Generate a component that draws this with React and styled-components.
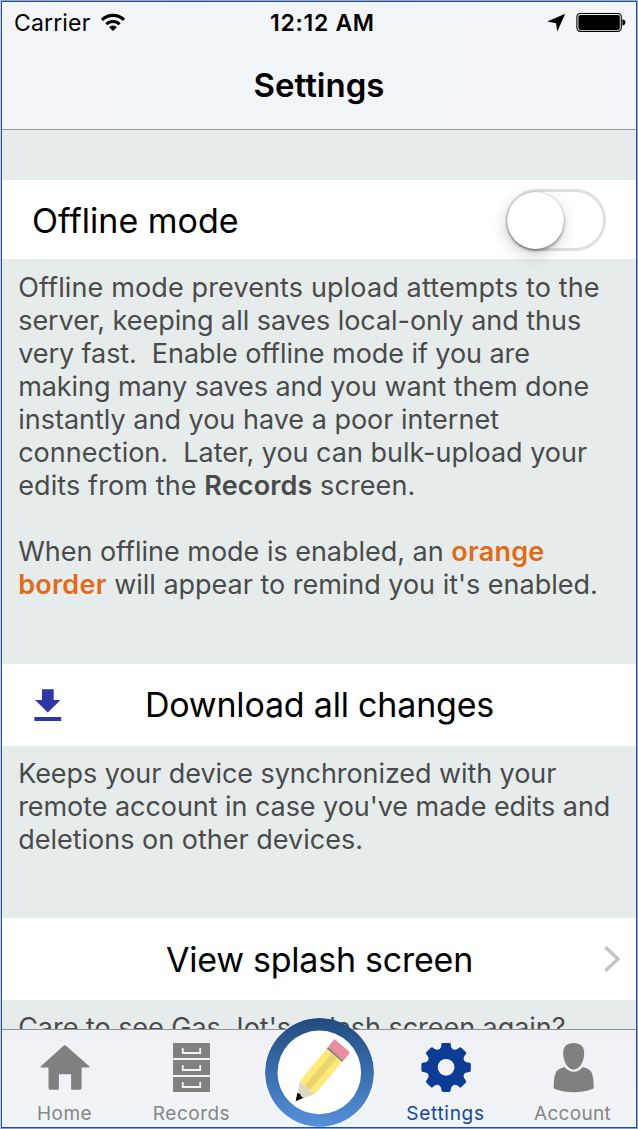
import React from "react";
import styled, { createGlobalStyle } from "styled-components";

const GlobalStyle = createGlobalStyle`
  * { box-sizing: border-box; }
  body {
    margin: 0;
    font-family: Inter, "Liberation Sans", sans-serif;
    color: #000;
  }
  svg { display: block; }
`;

const Frame = styled.div`
  width: 638px;
  height: 1129px;
  border: 1px solid #8fa6c4;
  border-left-color: #c3cfdc;
  border-right-color: #8fabcf;
  border-bottom-color: #7c9ecb;
`;

const Screen = styled.div`
  height: 100%;
  border: 1px solid #24508c;
  background: #e6eceb;
  display: flex;
  flex-direction: column;
`;

const Header = styled.header`
  flex: none;
  height: 128px;
  padding-top: 7px;
  background: linear-gradient(100deg, #f3f4f7, #f1f5f7 40%, #f3f4f7);
  border-bottom: 1px solid #999c9e;
`;

const StatusBar = styled.div`
  display: grid;
  grid-template-columns: 256px auto 1fr;
  align-items: center;
  height: 28px;
  padding: 0 10px 0 12px;
  font-size: 23px;
  line-height: 28px;
  white-space: nowrap;
`;

const Carrier = styled.div`
  display: flex;
  align-items: center;
  gap: 10px;
  letter-spacing: 0.15px;
`;

const Clock = styled.div`
  font-size: 23px;
  font-weight: 600;
  letter-spacing: 0.7px;
`;

const Indicators = styled.div`
  display: flex;
  justify-content: flex-end;
  align-items: center;
  gap: 10px;
`;

const Title = styled.h1`
  margin: 28px 0 0;
  font-size: 33px;
  font-weight: 600;
  line-height: 40px;
  text-align: center;
`;

const Content = styled.main`
  flex: 1;
  min-height: 0;
  overflow: hidden;
  padding-top: 50px;
`;

const SwitchRow = styled.div`
  display: flex;
  justify-content: space-between;
  align-items: center;
  height: 79px;
  padding: 1px 30px 0 30px;
  background: #fff;
`;

const ActionRow = styled.div`
  display: grid;
  grid-template-columns: 1fr auto 1fr;
  align-items: center;
  height: 82px;
  padding: 0 15px 0 32px;
  background: #fff;
`;

const Leading = styled.span`
  justify-self: start;
`;

const Trailing = styled.span`
  justify-self: end;
`;

const RowTitle = styled.span`
  font-size: 34px;
  line-height: 42px;
  letter-spacing: ${(p) => p.$tracking || 0}px;
  white-space: nowrap;
  margin-left: ${(p) => p.$shift || 0}px;
  padding-top: ${(p) => p.$drop || 0}px;
`;

const Track = styled.div`
  display: flex;
  align-items: center;
  width: 100px;
  height: 61.5px;
  border: 3px solid #e0e0e0;
  border-radius: 31px;
`;

const Knob = styled.div`
  flex: none;
  width: 57px;
  height: 57px;
  margin-left: -2px;
  border-radius: 50%;
  background: #fff;
  box-shadow: 0 2px 3px rgba(0, 0, 0, 0.36), -1px 5px 16px rgba(0, 0, 0, 0.2),
    0 0 1px rgba(0, 0, 0, 0.3);
`;

const Note = styled.div`
  height: ${(p) => p.$height}px;
  padding: ${(p) => p.$top || 11}px 0 0 16.2px;
  font-size: 27px;
  line-height: 33px;
  color: #4a4a4a;
`;

const Paragraph = styled.p`
  margin: 0 0 33px;
`;

const Line = styled.span`
  display: block;
  white-space: pre;
  letter-spacing: ${(p) => p.$tracking || 0}px;
`;

const Strong = styled.b`
  font-weight: 600;
`;

const Highlight = styled(Strong)`
  color: #df6b1b;
  letter-spacing: 0.25px;
`;

const TabBar = styled.nav`
  flex: none;
  position: relative;
  height: 98px;
  display: grid;
  grid-template-columns: 125px 129px 126px 127px 127px;
  justify-items: center;
  padding-top: 13px;
  background: linear-gradient(180deg, #f0f1f5, #f1f4f6);
  border-top: 1px solid #8f9294;
`;

const Tab = styled.div`
  display: flex;
  flex-direction: column;
  align-items: center;
  gap: 9px;
  color: ${(p) => (p.$active ? "#0d3c97" : "#808080")};
`;

const TabLabel = styled.span`
  font-size: 19px;
  line-height: 24px;
  letter-spacing: ${(p) => p.$tracking}px;
  color: ${(p) => (p.$active ? "#1546a0" : "#868686")};
`;

const ComposeButton = styled.div`
  position: absolute;
  left: 262.5px;
  top: -12px;
  width: 109px;
  height: 109px;
  border-radius: 50%;
  overflow: hidden;
`;

const WifiIcon = () => (
  <svg width="26" height="20" viewBox="100.5 12.5 26 20" fill="none" stroke="#000">
    <path d="M102.5 19.4A15.6 15.6 0 0 1 124.5 19.4" strokeWidth="3.1" />
    <path d="M106.9 23.7A9.3 9.3 0 0 1 120.1 23.7" strokeWidth="3" />
    <path d="M113.5 30.5L109.6 26.7A5.5 5.5 0 0 1 117.4 26.7Z" fill="#000" stroke="none" />
  </svg>
);

const LocationIcon = () => (
  <svg width="19" height="20" viewBox="547 13 19 20">
    <path d="M565.2 13.8L557.3 31.5L556 23.2L547.2 21.6Z" fill="#000" />
  </svg>
);

const BatteryIcon = () => (
  <svg width="50" height="20" viewBox="576 13 50 20">
    <rect x="576.9" y="13.4" width="44.4" height="18" rx="3.6" fill="none" stroke="#000" strokeWidth="1.1" />
    <rect x="578.4" y="14.9" width="41.4" height="15" rx="2" fill="#000" />
    <path d="M622.4 19.2Q625.4 19.8 625.4 22.4Q625.4 25 622.4 25.6Z" fill="#000" />
  </svg>
);

const DownloadIcon = () => (
  <svg width="28" height="34" viewBox="34 688 28 34" fill="#2d37a5">
    <path d="M42 689.2H53.7V700H60.5L47.8 712.5L35 700H42Z" />
    <rect x="34.4" y="717" width="26.8" height="4" />
  </svg>
);

const ChevronIcon = () => (
  <svg width="17" height="28" viewBox="604 945 17 28" fill="none" stroke="#c3c3c9" strokeWidth="3.4">
    <path d="M605.4 947.2L618 959L605.4 970.8" />
  </svg>
);

const HomeIcon = () => (
  <svg width="50" height="50" viewBox="39.5 1043 50 50" fill="currentColor">
    <path d="M64.3 1045.3Q65 1045.3 65.8 1046.1L89 1066.4Q89.6 1067.6 88.2 1067.6H81.1V1087.8Q81.1 1089.7 79.3 1089.7H70.6V1074.2H58.4V1089.7H49.8Q48 1089.7 48 1087.8V1067.6H40.6Q39.4 1067.4 40.4 1066.2L62.8 1046.1Q63.6 1045.3 64.3 1045.3Z" />
  </svg>
);

const RecordsIcon = () => (
  <svg width="50" height="50" viewBox="167 1043 50 50">
    {[1043, 1060, 1077].map((y) => (
      <g key={y}>
        <rect x="173" y={y} width="37" height="15" fill="currentColor" />
        <path d={`M182.8 ${y + 5}V${y + 10}H200.2V${y + 5}`} fill="none" stroke="#f1f3f5" strokeWidth="1.8" />
      </g>
    ))}
  </svg>
);

const polar = (r, deg) => {
  const a = (deg * Math.PI) / 180;
  return `${(25 + r * Math.sin(a)).toFixed(2)} ${(25 - r * Math.cos(a)).toFixed(2)}`;
};

const gearOutline =
  Array.from({ length: 8 }, (_, i) => {
    const c = i * 45;
    return (
      `${i ? "L" : "M"}${polar(24, c - 11)}Q${polar(25, c - 10)} ${polar(24.9, c - 7)}` +
      `L${polar(24.9, c + 7)}Q${polar(25, c + 10)} ${polar(24, c + 11)}` +
      `Q${polar(20.4, c + 13)} ${polar(19.4, c + 19)}L${polar(19.4, c + 26)}Q${polar(20.4, c + 32)} ${polar(24, c + 34)}`
    );
  }).join("") + "Z";

const GearIcon = () => (
  <svg width="50" height="50" viewBox="-0.1 0.7 50 50">
    <path
      d={`${gearOutline}M25 16.6A8.4 8.4 0 1 0 25 33.4A8.4 8.4 0 1 0 25 16.6Z`}
      fill="currentColor"
      fillRule="evenodd"
    />
  </svg>
);

const AccountIcon = () => (
  <svg width="50" height="50" viewBox="547 1043 50 50" fill="currentColor">
    <path d="M572.7 1043C579.5 1043 583.4 1046.5 583.2 1053.5C583 1062 578.5 1069.6 572.7 1069.6C566.9 1069.6 562.4 1062 562.2 1053.5C562 1046.5 565.9 1043 572.7 1043Z" />
    <path d="M563.6 1067C566 1070.2 569 1071.7 572.7 1071.7C576.4 1071.7 579.4 1070.2 581.8 1067C586 1068.3 589.5 1069.6 590.8 1073C592.3 1077 592.9 1082.5 592.7 1087.4Q592.6 1088.6 591.5 1089C585 1091.3 579 1092.2 572.7 1092.2C566.4 1092.2 560.4 1091.3 553.9 1089Q552.8 1088.6 552.7 1087.4C552.7 1082.5 553.1 1077 554.6 1073C555.9 1069.6 559.4 1068.3 563.6 1067Z" />
  </svg>
);

const PencilBadge = () => (
  <svg width="109" height="109" viewBox="0 0 109 109">
    <defs>
      <linearGradient id="ring" x1="0" y1="0" x2="0" y2="1">
        <stop offset="0" stopColor="#214b7e" />
        <stop offset="1" stopColor="#5491da" />
      </linearGradient>
    </defs>
    <circle cx="54.5" cy="54.4" r="54.4" fill="url(#ring)" />
    <circle cx="54.3" cy="54.4" r="41.8" fill="#fff" />
    <g transform="translate(-10 -8) scale(0.33333)">
      <path d="M239 88L284 126Q285 128 284 130L265 152L219 112L236 89Z" fill="#e98d9f" />
      <path d="M219 111L265 152L261 156L215 116Z" fill="#808080" />
      <path d="M215 116L261 156L180 252L134 214Z" fill="#ffe979" />
      <path d="M231 130L247 143L165 240L149 227Z" fill="#ead66f" />
      <path d="M134 214L180 252L122 274L128 247Z" fill="#dedac3" />
      <path d="M127 249L136 252L138 259L145 263L122 274Z" fill="#000" />
    </g>
  </svg>
);

const tabs = [
  { label: "Home", icon: HomeIcon, tracking: 0.4 },
  { label: "Records", icon: RecordsIcon, tracking: 0.5 },
  null,
  { label: "Settings", icon: GearIcon, tracking: 0.7, active: true },
  { label: "Account", icon: AccountIcon, tracking: 0.3 },
];

export default function App() {
  return (
    <Frame>
      <GlobalStyle />
      <Screen>
        <Header>
          <StatusBar>
            <Carrier>
              Carrier
              <WifiIcon />
            </Carrier>
            <Clock>12:12 AM</Clock>
            <Indicators>
              <LocationIcon />
              <BatteryIcon />
            </Indicators>
          </StatusBar>
          <Title>Settings</Title>
        </Header>

        <Content>
          <SwitchRow>
            <RowTitle $drop={1}>Offline mode</RowTitle>
            <Track role="switch" aria-checked="false">
              <Knob />
            </Track>
          </SwitchRow>
          <Note $height={405} $top={12}>
            <Paragraph>
              <Line $tracking={0.13}>Offline mode prevents upload attempts to the</Line>
              <Line $tracking={-0.05}>server, keeping all saves local-only and thus</Line>
              <Line $tracking={-0.07}>{"very fast.\u00a0 Enable offline mode if you are"}</Line>
              <Line $tracking={-0.08}>making many saves and you want them done</Line>
              <Line>instantly and you have a poor internet</Line>
              <Line $tracking={-0.01}>{"connection.\u00a0 Later, you can bulk-upload your"}</Line>
              <Line $tracking={0.11}>
                edits from the <Strong>Records</Strong> screen.
              </Line>
            </Paragraph>
            <Paragraph>
              <Line $tracking={-0.02}>
                When offline mode is enabled, an <Highlight>orange</Highlight>
              </Line>
              <Line $tracking={-0.02}>
                <Highlight>border</Highlight> will appear to remind you it's enabled.
              </Line>
            </Paragraph>
          </Note>

          <ActionRow>
            <Leading>
              <DownloadIcon />
            </Leading>
            <RowTitle $tracking={-0.2} $shift={-16}>Download all changes</RowTitle>
            <Trailing />
          </ActionRow>
          <Note $height={172}>
            <Line $tracking={-0.08}>Keeps your device synchronized with your</Line>
            <Line $tracking={-0.06}>remote account in case you've made edits and</Line>
            <Line>deletions on other devices.</Line>
          </Note>

          <ActionRow>
            <Leading />
            <RowTitle $tracking={-0.24} $shift={-16} $drop={1}>View splash screen</RowTitle>
            <Trailing>
              <ChevronIcon />
            </Trailing>
          </ActionRow>
          <Note $height={60}>
            <Line $tracking={-0.04}>Care to see Gas Jot's splash screen again?</Line>
          </Note>
        </Content>

        <TabBar>
          {tabs.map((tab) =>
            tab ? (
              <Tab key={tab.label} $active={tab.active}>
                <tab.icon />
                <TabLabel $tracking={tab.tracking} $active={tab.active}>
                  {tab.label}
                </TabLabel>
              </Tab>
            ) : (
              <span key="compose" />
            )
          )}
          <ComposeButton>
            <PencilBadge />
          </ComposeButton>
        </TabBar>
      </Screen>
    </Frame>
  );
}
